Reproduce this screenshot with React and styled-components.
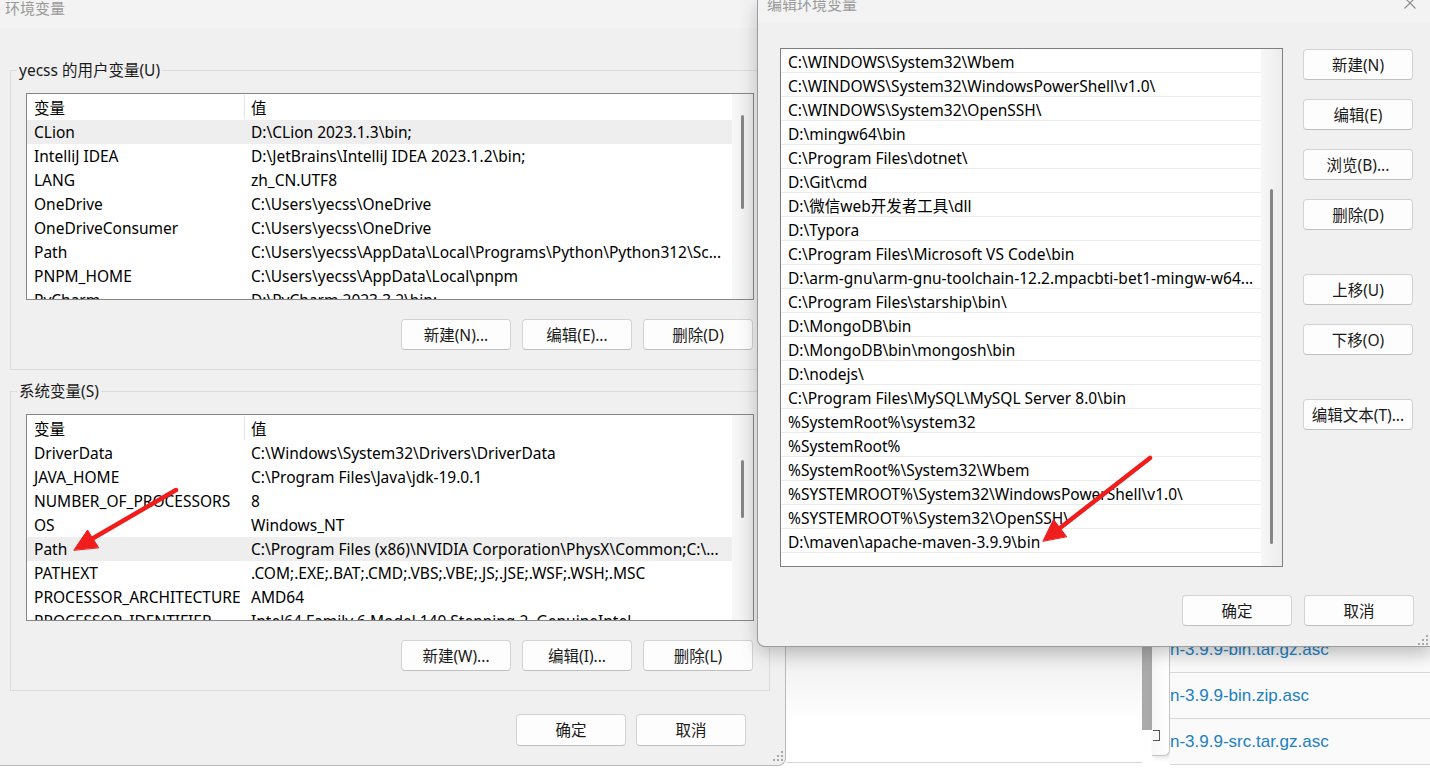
import React from "react";
import styled, { createGlobalStyle } from "styled-components";

const UI_FONT = `"Noto Sans", "Noto Sans CJK SC", sans-serif`;

const GlobalStyle = createGlobalStyle`
  html, body {
    margin: 0;
    padding: 0;
  }
  body {
    width: 1430px;
    height: 768px;
    overflow: hidden;
    background: #fff;
    font-family: ${UI_FONT};
  }
`;

const userVars = [
  ["CLion", "D:\\CLion 2023.1.3\\bin;"],
  ["IntelliJ IDEA", "D:\\JetBrains\\IntelliJ IDEA 2023.1.2\\bin;"],
  ["LANG", "zh_CN.UTF8"],
  ["OneDrive", "C:\\Users\\yecss\\OneDrive"],
  ["OneDriveConsumer", "C:\\Users\\yecss\\OneDrive"],
  ["Path", "C:\\Users\\yecss\\AppData\\Local\\Programs\\Python\\Python312\\Sc..."],
  ["PNPM_HOME", "C:\\Users\\yecss\\AppData\\Local\\pnpm"],
  ["PyCharm", "D:\\PyCharm 2023.3.2\\bin;"],
];

const systemVars = [
  ["DriverData", "C:\\Windows\\System32\\Drivers\\DriverData"],
  ["JAVA_HOME", "C:\\Program Files\\Java\\jdk-19.0.1"],
  ["NUMBER_OF_PROCESSORS", "8"],
  ["OS", "Windows_NT"],
  ["Path", "C:\\Program Files (x86)\\NVIDIA Corporation\\PhysX\\Common;C:\\..."],
  ["PATHEXT", ".COM;.EXE;.BAT;.CMD;.VBS;.VBE;.JS;.JSE;.WSF;.WSH;.MSC"],
  ["PROCESSOR_ARCHITECTURE", "AMD64"],
  ["PROCESSOR_IDENTIFIER", "Intel64 Family 6 Model 140 Stepping 2, GenuineIntel"],
];

const pathEntries = [
  "C:\\WINDOWS\\System32\\Wbem",
  "C:\\WINDOWS\\System32\\WindowsPowerShell\\v1.0\\",
  "C:\\WINDOWS\\System32\\OpenSSH\\",
  "D:\\mingw64\\bin",
  "C:\\Program Files\\dotnet\\",
  "D:\\Git\\cmd",
  "D:\\微信web开发者工具\\dll",
  "D:\\Typora",
  "C:\\Program Files\\Microsoft VS Code\\bin",
  "D:\\arm-gnu\\arm-gnu-toolchain-12.2.mpacbti-bet1-mingw-w64...",
  "C:\\Program Files\\starship\\bin\\",
  "D:\\MongoDB\\bin",
  "D:\\MongoDB\\bin\\mongosh\\bin",
  "D:\\nodejs\\",
  "C:\\Program Files\\MySQL\\MySQL Server 8.0\\bin",
  "%SystemRoot%\\system32",
  "%SystemRoot%",
  "%SystemRoot%\\System32\\Wbem",
  "%SYSTEMROOT%\\System32\\WindowsPowerShell\\v1.0\\",
  "%SYSTEMROOT%\\System32\\OpenSSH\\",
  "D:\\maven\\apache-maven-3.9.9\\bin",
];

const downloads = [
  "n-3.9.9-bin.tar.gz.asc",
  "n-3.9.9-bin.zip.asc",
  "n-3.9.9-src.tar.gz.asc",
];

const ResizeGrip = () => (
  <Grip width="10" height="10" viewBox="0 0 10 10">
    <rect x="8" y="0" width="2" height="2" />
    <rect x="4" y="4" width="2" height="2" />
    <rect x="8" y="4" width="2" height="2" />
    <rect x="0" y="8" width="2" height="2" />
    <rect x="4" y="8" width="2" height="2" />
    <rect x="8" y="8" width="2" height="2" />
  </Grip>
);

const VarList = ({ rows, selected, thumbTop, thumbHeight }) => (
  <ListFrame>
    <ListMain>
      <HeaderRow>
        <NameCell>变量</NameCell>
        <HeaderDivider />
        <ValueCell>值</ValueCell>
      </HeaderRow>
      {rows.map(([name, value], i) => (
        <VarRow key={name + i} $selected={i === selected}>
          <NameCell>{name}</NameCell>
          <Gap />
          <ValueCell>{value}</ValueCell>
        </VarRow>
      ))}
    </ListMain>
    <ScrollTrack>
      <Thumb $top={thumbTop} $height={thumbHeight} />
    </ScrollTrack>
  </ListFrame>
);

const App = () => {
  return (
    <>
      <GlobalStyle />
      <Desktop>
        <BackPage>
          <Blank />
          <GrayBar />
          <NarrowWindow>
            <SmallBox />
          </NarrowWindow>
          <LinkList>
            {downloads.map((d) => (
              <LinkRow key={d}>
                <LinkText>{d}</LinkText>
              </LinkRow>
            ))}
          </LinkList>
        </BackPage>

        <MainWindow>
          <MainTitleBar>
            <TitleText>环境变量</TitleText>
          </MainTitleBar>
          <MainBody>
            <Group $top={32}>
              <Legend>yecss 的用户变量(U)</Legend>
              <VarList rows={userVars} selected={0} thumbTop={21} thumbHeight={94} />
              <ButtonRow>
                <Button>新建(N)...</Button>
                <Button>编辑(E)...</Button>
                <Button>删除(D)</Button>
              </ButtonRow>
            </Group>
            <Group $top={11}>
              <Legend>系统变量(S)</Legend>
              <VarList rows={systemVars} selected={4} thumbTop={45} thumbHeight={58} />
              <ButtonRow>
                <Button>新建(W)...</Button>
                <Button>编辑(I)...</Button>
                <Button>删除(L)</Button>
              </ButtonRow>
            </Group>
            <MainFooter>
              <Button $tall>确定</Button>
              <Button $tall>取消</Button>
            </MainFooter>
          </MainBody>
          <GripSpot $right={2} $bottom={4}>
            <ResizeGrip />
          </GripSpot>
        </MainWindow>

        <EditWindow>
          <EditTitleBar>
            <EditTitleText>编辑环境变量</EditTitleText>
            <CloseIcon width="12" height="12" viewBox="0 0 12 12">
              <path d="M0.5 0.5 L11.5 11.5 M11.5 0.5 L0.5 11.5" />
            </CloseIcon>
          </EditTitleBar>
          <EditBody>
            <PathList>
              <PathRows>
                {pathEntries.map((p) => (
                  <PathRow key={p}>{p}</PathRow>
                ))}
              </PathRows>
              <ScrollTrack>
                <Thumb $top={140} $height={355} />
              </ScrollTrack>
            </PathList>
            <SideButtons>
              <Button>新建(N)</Button>
              <Button>编辑(E)</Button>
              <Button>浏览(B)...</Button>
              <Button>删除(D)</Button>
              <Button $gapBefore={25}>上移(U)</Button>
              <Button>下移(O)</Button>
              <Button $gapBefore={25}>编辑文本(T)...</Button>
            </SideButtons>
          </EditBody>
          <EditFooter>
            <Button>确定</Button>
            <Button>取消</Button>
          </EditFooter>
          <GripSpot $right={2} $bottom={1}>
            <ResizeGrip />
          </GripSpot>
        </EditWindow>

        <ArrowLayer width="1430" height="768" viewBox="0 0 1430 768">
          <line x1="176" y1="490" x2="90" y2="540" />
          <polygon points="74,550 87.5,530 98.5,547.5" />
          <line x1="1150" y1="458" x2="1060" y2="528" />
          <polygon points="1043,541 1053.5,519.5 1066.5,536.5" />
        </ArrowLayer>
      </Desktop>
    </>
  );
};

export default App;

const Desktop = styled.div`
    position: relative;
    width: 1430px;
    height: 768px;
    overflow: hidden;
    background: #fff;
    font-family: ${UI_FONT};
    color: #000;
`;

/* background browser page peeking under the dialogs */
const BackPage = styled.div`
    position: absolute;
    left: 786px;
    top: 627px;
    right: 0;
    bottom: 0;
    display: flex;
    align-items: flex-start;
`;
const Blank = styled.div`
    width: 356px;
    height: 135px;
    border-bottom: 1px solid #d6d6d6;
    background: linear-gradient(to bottom, #e2e2e2 0%, #f4f4f4 35%, #ffffff 70%);
`;
const GrayBar = styled.div`
    width: 10px;
    height: 103px;
    background: #a9a9a9;
`;
const NarrowWindow = styled.div`
    display: flex;
    align-items: flex-end;
    width: 17px;
    height: 128px;
    background: linear-gradient(to right, #f7f7f7, #ffffff);
    border-right: 1px solid #c4c4c4;
    border-bottom: 1px solid #c4c4c4;
    border-bottom-right-radius: 6px;
    box-shadow: 2px 2px 4px rgba(0, 0, 0, 0.12);
`;
const SmallBox = styled.div`
    width: 6px;
    height: 9px;
    margin: 0 0 14px 1px;
    border: 1px solid #555;
    border-left: none;
`;
const LinkList = styled.div`
    flex: 1;
    display: flex;
    flex-direction: column;
    background: linear-gradient(to bottom, #e6e6e6 0%, #fafafa 30%, #fafafa 100%);
`;
const LinkRow = styled.div`
    display: flex;
    align-items: center;
    height: 45px;
    border-bottom: 1px solid #d8d8d8;
`;
const LinkText = styled.span`
    margin-left: 0;
    font-family: "Liberation Sans", Arial, sans-serif;
    font-size: 17px;
    color: #1b80c2;
`;

/* left window: 环境变量 */
const MainWindow = styled.div`
    position: absolute;
    left: 0;
    top: 0;
    width: 786px;
    height: 766px;
    box-sizing: border-box;
    display: flex;
    flex-direction: column;
    background: #f0f0f0;
    border-right: 1px solid #b9b9b9;
    border-bottom: 1px solid #b9b9b9;
    border-bottom-right-radius: 8px;
`;
const MainTitleBar = styled.div`
    height: 28px;
    flex-shrink: 0;
    padding-left: 5px;
    background: #f3f3f3;
    overflow: hidden;
`;
const TitleText = styled.div`
    margin-top: -2px;
    font-size: 15px;
    line-height: 20px;
    color: #9a9a9a;
`;
const MainBody = styled.div`
    display: flex;
    flex-direction: column;
    padding: 0 15px 0 10px;
`;
const Group = styled.fieldset`
    margin: ${(p) => p.$top}px 0 0 0;
    padding: 13px 15px 19px 15px;
    border: 1px solid #dcdcdc;
    min-width: 0;
`;
const Legend = styled.legend`
    margin-left: -9px;
    padding: 0 2px;
    font-size: 15.5px;
    line-height: 20px;
    color: #1a1a1a;
`;
const ListFrame = styled.div`
    display: flex;
    height: 205px;
    border: 1px solid #868686;
    background: #fff;
    overflow: hidden;
`;
const ListMain = styled.div`
    flex: 1;
    min-width: 0;
    display: flex;
    flex-direction: column;
`;
const HeaderRow = styled.div`
    display: flex;
    align-items: center;
    height: 26px;
    flex-shrink: 0;
    font-size: 15.5px;
`;
const HeaderDivider = styled.div`
    width: 1px;
    height: 24px;
    background: #e3e3e3;
`;
const Gap = styled.div`
    width: 1px;
`;
const VarRow = styled.div`
    display: flex;
    align-items: center;
    height: 24px;
    flex-shrink: 0;
    font-size: 15.5px;
    background: ${(p) => (p.$selected ? "#eeeeee" : "transparent")};
`;
const NameCell = styled.div`
    width: 217px;
    flex-shrink: 0;
    box-sizing: border-box;
    padding-left: 7px;
    white-space: nowrap;
    overflow: hidden;
`;
const ValueCell = styled.div`
    flex: 1;
    min-width: 0;
    padding-left: 6px;
    white-space: nowrap;
    overflow: hidden;
`;
const ScrollTrack = styled.div`
    width: 21px;
    flex-shrink: 0;
    display: flex;
    flex-direction: column;
    align-items: center;
    background: linear-gradient(to right, #f7f7f7, #ededed);
`;
const Thumb = styled.div`
    width: 3px;
    margin-top: ${(p) => p.$top}px;
    height: ${(p) => p.$height}px;
    border-radius: 2px;
    background: #878787;
`;
const ButtonRow = styled.div`
    display: flex;
    justify-content: flex-end;
    gap: 11px;
    margin-top: 19px;
    padding-right: 1px;
`;
const Button = styled.button`
    width: 110px;
    height: ${(p) => (p.$tall ? 32 : 31)}px;
    flex-shrink: 0;
    margin-top: ${(p) => p.$gapBefore || 0}px;
    padding: 0;
    border: 1px solid #d3d3d3;
    border-bottom-color: #c0c0c0;
    border-radius: 4px;
    background: #fdfdfd;
    font-family: ${UI_FONT};
    font-size: 15.5px;
    line-height: 20px;
    color: #1a1a1a;
`;
const MainFooter = styled.div`
    display: flex;
    justify-content: flex-end;
    gap: 10px;
    margin-top: 23px;
    padding-right: 24px;
`;
const GripSpot = styled.div`
    position: absolute;
    right: ${(p) => p.$right}px;
    bottom: ${(p) => p.$bottom}px;
`;
const Grip = styled.svg`
    display: block;
    fill: #a9a9a9;
`;

/* right dialog: 编辑环境变量 */
const EditWindow = styled.div`
    position: absolute;
    left: 757px;
    top: 0;
    width: 673px;
    height: 647px;
    box-sizing: border-box;
    display: flex;
    flex-direction: column;
    background: #f0f0f0;
    border-left: 1px solid #9c9c9c;
    border-bottom: 1px solid #9c9c9c;
    border-bottom-left-radius: 8px;
    box-shadow: 0 6px 18px rgba(0, 0, 0, 0.22);
`;
const EditTitleBar = styled.div`
    height: 22px;
    flex-shrink: 0;
    display: flex;
    justify-content: space-between;
    align-items: flex-start;
    padding: 0 14px 0 9px;
    background: #f3f3f3;
    overflow: hidden;
`;
const EditTitleText = styled.div`
    margin-top: -6px;
    font-size: 15px;
    line-height: 20px;
    color: #9a9a9a;
`;
const CloseIcon = styled.svg`
    margin-top: -3px;
    fill: none;
    stroke: #8a8a8a;
    stroke-width: 1.1;
`;
const EditBody = styled.div`
    display: flex;
    gap: 20px;
    padding: 26px 0 0 22px;
`;
const PathList = styled.div`
    display: flex;
    width: 503px;
    height: 519px;
    box-sizing: border-box;
    border: 1px solid #7f7f7f;
    background: #fff;
    overflow: hidden;
`;
const PathRows = styled.div`
    flex: 1;
    min-width: 0;
    display: flex;
    flex-direction: column;
`;
const PathRow = styled.div`
    height: 21px;
    padding-top: 2px;
    flex-shrink: 0;
    display: flex;
    align-items: center;
    padding-left: 7px;
    border-bottom: 1px solid #ebebeb;
    font-size: 15.5px;
    white-space: nowrap;
    overflow: hidden;
`;
const SideButtons = styled.div`
    display: flex;
    flex-direction: column;
    gap: 19px;
    padding-top: 1px;
`;
const EditFooter = styled.div`
    display: flex;
    justify-content: flex-end;
    gap: 12px;
    margin-top: 28px;
    padding-right: 16px;
`;

const ArrowLayer = styled.svg`
    position: absolute;
    left: 0;
    top: 0;
    pointer-events: none;
    fill: #f01d1d;
    stroke: #f01d1d;
    stroke-width: 4.5;
    stroke-linecap: round;
    stroke-linejoin: round;

    polygon {
        stroke-width: 1;
    }
`;
